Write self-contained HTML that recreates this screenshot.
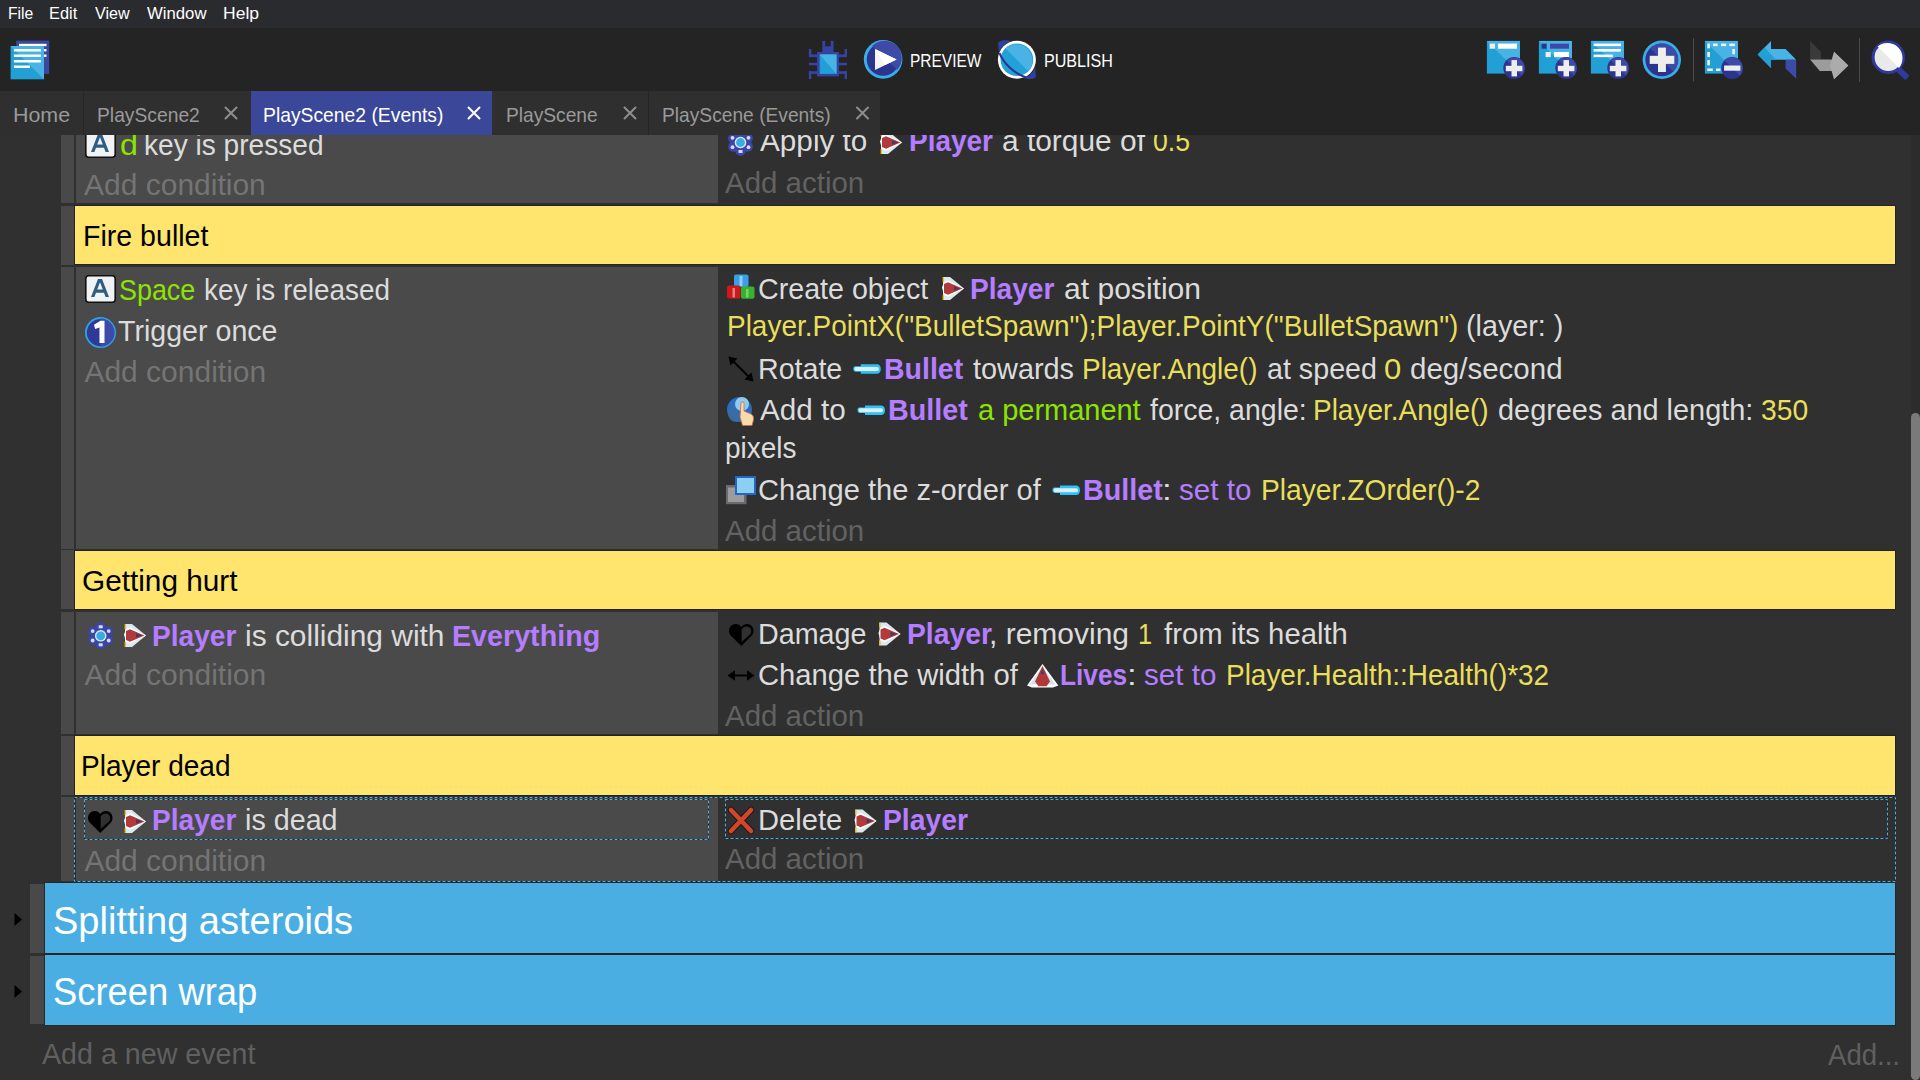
<!DOCTYPE html>
<html><head><meta charset="utf-8"><style>
html,body{margin:0;padding:0;width:1920px;height:1080px;overflow:hidden;background:#303030;}
.b{position:absolute;}
.t{position:absolute;white-space:pre;transform-origin:0 0;}
svg{position:absolute;overflow:visible;}
</style></head><body>
<!-- sheet -->
<div class="b" style="left:0;top:135px;width:1920px;height:945px;background:#303030"></div>
<!-- event 1 -->
<div class="b" style="left:61px;top:135px;width:13px;height:68px;background:#494949"></div>
<div class="b" style="left:76px;top:135px;width:642px;height:68px;background:#4a4a4a"></div>
<!-- comment 1 -->
<div class="b" style="left:61px;top:206px;width:13px;height:59px;background:#494949"></div>
<div class="b" style="left:74px;top:205px;width:1822px;height:60px;background:#22232b"></div>
<div class="b" style="left:75px;top:206px;width:1820px;height:58px;background:#ffe46e"></div>
<!-- event 3 -->
<div class="b" style="left:61px;top:267px;width:13px;height:282px;background:#494949"></div>
<div class="b" style="left:76px;top:267px;width:642px;height:282px;background:#4a4a4a"></div>
<!-- comment 2 -->
<div class="b" style="left:61px;top:550px;width:13px;height:59px;background:#494949"></div>
<div class="b" style="left:74px;top:550px;width:1822px;height:60px;background:#22232b"></div>
<div class="b" style="left:75px;top:551px;width:1820px;height:58px;background:#ffe46e"></div>
<!-- event 5 -->
<div class="b" style="left:61px;top:612px;width:13px;height:122px;background:#494949"></div>
<div class="b" style="left:76px;top:612px;width:642px;height:122px;background:#4a4a4a"></div>
<!-- comment 3 -->
<div class="b" style="left:61px;top:736px;width:13px;height:59px;background:#494949"></div>
<div class="b" style="left:74px;top:735px;width:1822px;height:61px;background:#22232b"></div>
<div class="b" style="left:75px;top:736px;width:1820px;height:59px;background:#ffe46e"></div>
<!-- event 7 -->
<div class="b" style="left:61px;top:797px;width:13px;height:84px;background:#494949"></div>
<div class="b" style="left:76px;top:797px;width:642px;height:84px;background:#4a4a4a"></div>
<!-- group 1 -->
<div class="b" style="left:30px;top:884px;width:14px;height:69px;background:#494949"></div>
<div class="b" style="left:44px;top:882px;width:1852px;height:72px;background:#2b2624"></div>
<div class="b" style="left:45px;top:883px;width:1850px;height:70px;background:#4aaee3"></div>
<!-- group 2 -->
<div class="b" style="left:30px;top:956px;width:14px;height:68px;background:#494949"></div>
<div class="b" style="left:44px;top:954px;width:1852px;height:72px;background:#2b2624"></div>
<div class="b" style="left:45px;top:955px;width:1850px;height:70px;background:#4aaee3"></div>
<!-- arrows -->
<svg style="left:0;top:0" width="1" height="1"><path d="M14.5 913 L22 919.5 L14.5 926 Z" fill="#000"/><path d="M14.5 985 L22 991.5 L14.5 998 Z" fill="#000"/></svg>
<!-- scrollbar -->
<div class="b" style="left:1911px;top:135px;width:9px;height:945px;background:#2c2c2c"></div>
<div class="b" style="left:1911px;top:413px;width:9px;height:667px;background:#7a7a7a;border-radius:5px"></div>

<svg style="left:0;top:0" width="1920" height="1080">
<g fill="none" stroke-width="1">
<rect x="74.5" y="797.5" width="1821" height="84" stroke="#1c1c1c"/>
<rect x="74.5" y="797.5" width="1821" height="84" stroke="#4ab0e4" stroke-dasharray="3 2"/>
<rect x="84.5" y="799.5" width="624" height="40" stroke="#1c1c1c"/>
<rect x="84.5" y="799.5" width="624" height="40" stroke="#4ab0e4" stroke-dasharray="3 2"/>
<rect x="725.5" y="799.5" width="1162" height="39" stroke="#1c1c1c"/>
<rect x="725.5" y="799.5" width="1162" height="39" stroke="#4ab0e4" stroke-dasharray="3 2"/>
</g>
</svg>

<svg style="left:0;top:0" width="1920" height="1080" viewBox="0 0 1920 1080">

<!-- event 1 -->
<g transform="translate(85,130)">
    <rect x="0.8" y="0.8" width="29.4" height="26.4" rx="3" fill="#f0f2f4" stroke="#111" stroke-width="1.6"/>
    <path d="M6 22 L13 4 L17 4 L24 22 L20.6 22 L19 17.8 L11 17.8 L9.4 22 Z M12.2 14.6 L17.8 14.6 L15 7.2 Z" fill="#2f5d82"/></g>
<g transform="translate(727,129)">
    <circle cx="13.5" cy="13.5" r="8.6" fill="none" stroke="#3440a0" stroke-width="4.5"/>
    <g fill="#3a46a8">
      <circle cx="13.5" cy="5" r="5"/><circle cx="13.5" cy="22" r="5"/>
      <circle cx="6.1" cy="9.25" r="5"/><circle cx="20.9" cy="9.25" r="5"/>
      <circle cx="6.1" cy="17.75" r="5"/><circle cx="20.9" cy="17.75" r="5"/>
    </g>
    <g fill="#d8dcf0">
      <rect x="11.5" y="3" width="4" height="3"/><rect x="11.5" y="21" width="4" height="3"/>
      <circle cx="5.5" cy="8.8" r="1.9"/><circle cx="21.5" cy="8.8" r="1.9"/>
      <circle cx="5.5" cy="18.2" r="1.9"/><circle cx="21.5" cy="18.2" r="1.9"/>
    </g>
    <circle cx="13.5" cy="13.5" r="5.8" fill="#dfe4f6"/>
    <circle cx="13.5" cy="13.5" r="4.4" fill="#36ace0"/></g>
<g transform="translate(880,131)">
    <path d="M1 0 L8 0 L22 11.5 L8 23 L1 23 Z" fill="#dbe8ee"/>
    <path d="M0 10.5 L2 5 L6 3.2 L22 11.5 L6 19.8 L2 18 Z" fill="#ffffff"/>
    <path d="M2 7 L6 5.3 L20.5 11.5 L6 17.7 L2 16 Z" fill="#b13a3a"/>
    <path d="M12 9.3 L18 11.5 L12 13.7 Z" fill="#48395e"/>
    <rect x="0.6" y="0" width="1.4" height="5" fill="#e8c020"/>
    <rect x="0.6" y="18" width="1.4" height="5" fill="#e8c020"/></g>
<!-- event 3 conditions -->
<g transform="translate(85,275)">
    <rect x="0.8" y="0.8" width="29.4" height="26.4" rx="3" fill="#f0f2f4" stroke="#111" stroke-width="1.6"/>
    <path d="M6 22 L13 4 L17 4 L24 22 L20.6 22 L19 17.8 L11 17.8 L9.4 22 Z M12.2 14.6 L17.8 14.6 L15 7.2 Z" fill="#2f5d82"/></g>
<g transform="translate(85,317)">
    <circle cx="15.5" cy="15.6" r="14.6" fill="#2f3a98" stroke="#2fa3e0" stroke-width="1.8"/>
    <path d="M15.5 1.5 A14 14 0 0 1 15.5 29.7 Z" fill="#3d4aa8"/>
    <path d="M9 7.8 L15.5 3.8 L19.5 3.8 L19.5 26 L14.5 26 L14.5 10.5 L10.2 12 Z" fill="#ffffff"/></g>
<!-- create object -->
<g>
  <rect x="734" y="274.5" width="14.5" height="12.5" rx="2" fill="#3a9ee8"/>
  <rect x="739.5" y="276" width="3" height="10" fill="#8fd0f8"/>
  <rect x="727" y="285.5" width="13.5" height="13" rx="2" fill="#cf1818"/>
  <rect x="732.5" y="288" width="2.5" height="9.5" fill="#e88080"/>
  <rect x="741" y="286.5" width="13.5" height="12.2" rx="2" fill="#38b030"/>
  <rect x="746" y="289" width="2.5" height="8.5" fill="#70d868"/>
</g>
<g transform="translate(942,277)">
    <path d="M1 0 L8 0 L22 11.5 L8 23 L1 23 Z" fill="#dbe8ee"/>
    <path d="M0 10.5 L2 5 L6 3.2 L22 11.5 L6 19.8 L2 18 Z" fill="#ffffff"/>
    <path d="M2 7 L6 5.3 L20.5 11.5 L6 17.7 L2 16 Z" fill="#b13a3a"/>
    <path d="M12 9.3 L18 11.5 L12 13.7 Z" fill="#48395e"/>
    <rect x="0.6" y="0" width="1.4" height="5" fill="#e8c020"/>
    <rect x="0.6" y="18" width="1.4" height="5" fill="#e8c020"/></g>
<!-- rotate -->
<g stroke="#000" stroke-width="2" fill="#000">
  <line x1="732" y1="360" x2="750" y2="378"/>
  <path d="M728.5 356.5 L737.5 358.5 L730.5 365.5 Z" stroke="none"/>
  <path d="M753.5 381.5 L744.5 379.5 L751.5 372.5 Z" stroke="none"/>
</g>
<g transform="translate(852.8,363.8)">
    <path d="M0.5 5 C0.5 3 1.5 2.5 3 2.5 L8 2.5 L8 0.5 L24 0.5 C27 0.5 28 3 28 5.2 C28 7.5 27 10 24 10 L8 10 L8 8 L3 8 C1.5 8 0.5 7.2 0.5 5 Z" fill="#2ec0f8"/>
    <path d="M1.6 5.2 C1.6 4 2.2 3.3 3.5 3.3 L24 3.3 C25.6 3.3 26 4.2 26 5.2 C26 6.3 25.6 7.2 24 7.2 L3.5 7.2 C2.2 7.2 1.6 6.5 1.6 5.2 Z" fill="#d8f0fc"/></g>
<!-- force -->
<g>
  <circle cx="739.5" cy="409.5" r="12.5" fill="#2a6cc0"/>
  <circle cx="736" cy="414" r="8" fill="#3b6e9c" opacity="0.8"/>
  <circle cx="742" cy="404" r="7" fill="#9ad6f4" opacity="0.9"/>
  <path d="M741 403 C741 401.5 744 401.5 744 403 L744 411 L751 414 C753 415 754 417 753.5 420 L752 425.5 L742.5 425.5 L740 417 Z" fill="#f6dcaa" stroke="#d06050" stroke-width="0.8"/>
</g>
<g transform="translate(857,405)">
    <path d="M0.5 5 C0.5 3 1.5 2.5 3 2.5 L8 2.5 L8 0.5 L24 0.5 C27 0.5 28 3 28 5.2 C28 7.5 27 10 24 10 L8 10 L8 8 L3 8 C1.5 8 0.5 7.2 0.5 5 Z" fill="#2ec0f8"/>
    <path d="M1.6 5.2 C1.6 4 2.2 3.3 3.5 3.3 L24 3.3 C25.6 3.3 26 4.2 26 5.2 C26 6.3 25.6 7.2 24 7.2 L3.5 7.2 C2.2 7.2 1.6 6.5 1.6 5.2 Z" fill="#d8f0fc"/></g>
<!-- z-order -->
<g>
  <rect x="726" y="485" width="20.5" height="19.2" fill="#6a6a6a"/>
  <rect x="728" y="487.5" width="16" height="14.5" fill="#9c9c9c"/>
  <rect x="735" y="476" width="21" height="19" fill="#2466c4"/>
  <rect x="737" y="478" width="17" height="15" fill="#8ccff3"/>
</g>
<g transform="translate(1052,485)">
    <path d="M0.5 5 C0.5 3 1.5 2.5 3 2.5 L8 2.5 L8 0.5 L24 0.5 C27 0.5 28 3 28 5.2 C28 7.5 27 10 24 10 L8 10 L8 8 L3 8 C1.5 8 0.5 7.2 0.5 5 Z" fill="#2ec0f8"/>
    <path d="M1.6 5.2 C1.6 4 2.2 3.3 3.5 3.3 L24 3.3 C25.6 3.3 26 4.2 26 5.2 C26 6.3 25.6 7.2 24 7.2 L3.5 7.2 C2.2 7.2 1.6 6.5 1.6 5.2 Z" fill="#d8f0fc"/></g>
<!-- event 5 conditions -->
<g transform="translate(87.2,622.3)">
    <circle cx="13.5" cy="13.5" r="8.6" fill="none" stroke="#3440a0" stroke-width="4.5"/>
    <g fill="#3a46a8">
      <circle cx="13.5" cy="5" r="5"/><circle cx="13.5" cy="22" r="5"/>
      <circle cx="6.1" cy="9.25" r="5"/><circle cx="20.9" cy="9.25" r="5"/>
      <circle cx="6.1" cy="17.75" r="5"/><circle cx="20.9" cy="17.75" r="5"/>
    </g>
    <g fill="#d8dcf0">
      <rect x="11.5" y="3" width="4" height="3"/><rect x="11.5" y="21" width="4" height="3"/>
      <circle cx="5.5" cy="8.8" r="1.9"/><circle cx="21.5" cy="8.8" r="1.9"/>
      <circle cx="5.5" cy="18.2" r="1.9"/><circle cx="21.5" cy="18.2" r="1.9"/>
    </g>
    <circle cx="13.5" cy="13.5" r="5.8" fill="#dfe4f6"/>
    <circle cx="13.5" cy="13.5" r="4.4" fill="#36ace0"/></g>
<g transform="translate(124,624)">
    <path d="M1 0 L8 0 L22 11.5 L8 23 L1 23 Z" fill="#dbe8ee"/>
    <path d="M0 10.5 L2 5 L6 3.2 L22 11.5 L6 19.8 L2 18 Z" fill="#ffffff"/>
    <path d="M2 7 L6 5.3 L20.5 11.5 L6 17.7 L2 16 Z" fill="#b13a3a"/>
    <path d="M12 9.3 L18 11.5 L12 13.7 Z" fill="#48395e"/>
    <rect x="0.6" y="0" width="1.4" height="5" fill="#e8c020"/>
    <rect x="0.6" y="18" width="1.4" height="5" fill="#e8c020"/></g>
<!-- damage -->
<g transform="translate(728.5,623)">
    <path d="M12.8 23 L2.2 12.5 C-0.5 9.5 0 3.5 4.5 1.5 C8 0 11 1.5 12.8 4 C14.6 1.5 17.6 0 21.1 1.5 C25.6 3.5 26.1 9.5 23.4 12.5 Z" fill="#000"/>
    <path d="M13.2 19 L13.2 6.5 C14.8 4 17.5 3 20 4 C23 5.3 23.5 9.3 21.6 11.3 Z" fill="#303030"/></g>
<g transform="translate(878.5,622.5)">
    <path d="M1 0 L8 0 L22 11.5 L8 23 L1 23 Z" fill="#dbe8ee"/>
    <path d="M0 10.5 L2 5 L6 3.2 L22 11.5 L6 19.8 L2 18 Z" fill="#ffffff"/>
    <path d="M2 7 L6 5.3 L20.5 11.5 L6 17.7 L2 16 Z" fill="#b13a3a"/>
    <path d="M12 9.3 L18 11.5 L12 13.7 Z" fill="#48395e"/>
    <rect x="0.6" y="0" width="1.4" height="5" fill="#e8c020"/>
    <rect x="0.6" y="18" width="1.4" height="5" fill="#e8c020"/></g>
<!-- width -->
<g fill="#000">
  <rect x="733" y="674.5" width="15" height="2"/>
  <path d="M727.5 675.5 L735 670.3 L735 680.7 Z"/>
  <path d="M754.5 675.5 L747 670.3 L747 680.7 Z"/>
</g>
<!-- lives -->
<g>
  <path d="M1042.5 664 L1058.3 685.5 L1053 687.5 L1036 687.5 L1032 687.5 L1027 685.5 Z" fill="#ffffff"/>
  <path d="M1042.5 667 L1055.5 684.5 L1029.5 684.5 Z" fill="#cfe4ea"/>
  <path d="M1042.5 666 L1050 681.5 L1046.5 686.2 L1038.5 686.2 L1035 681.5 Z" fill="#b03838"/>
  <path d="M1042.5 669 L1044.5 674 L1040.5 674 Z" fill="#44406a"/>
</g>
<!-- event 7 -->
<g transform="translate(87.5,810)">
    <path d="M12.8 23 L2.2 12.5 C-0.5 9.5 0 3.5 4.5 1.5 C8 0 11 1.5 12.8 4 C14.6 1.5 17.6 0 21.1 1.5 C25.6 3.5 26.1 9.5 23.4 12.5 Z" fill="#000"/>
    <path d="M13.2 19 L13.2 6.5 C14.8 4 17.5 3 20 4 C23 5.3 23.5 9.3 21.6 11.3 Z" fill="#303030"/></g>
<g transform="translate(124,810)">
    <path d="M1 0 L8 0 L22 11.5 L8 23 L1 23 Z" fill="#dbe8ee"/>
    <path d="M0 10.5 L2 5 L6 3.2 L22 11.5 L6 19.8 L2 18 Z" fill="#ffffff"/>
    <path d="M2 7 L6 5.3 L20.5 11.5 L6 17.7 L2 16 Z" fill="#b13a3a"/>
    <path d="M12 9.3 L18 11.5 L12 13.7 Z" fill="#48395e"/>
    <rect x="0.6" y="0" width="1.4" height="5" fill="#e8c020"/>
    <rect x="0.6" y="18" width="1.4" height="5" fill="#e8c020"/></g>
<!-- delete X -->
<g stroke-linecap="round">
  <path d="M731 810 L751 831 M751 810 L731 831" stroke="#1a1a1a" stroke-width="6.5"/>
  <path d="M731 810 L751 831 M751 810 L731 831" stroke="#d4462c" stroke-width="4.6"/>
</g>
<g transform="translate(854.5,809.5)">
    <path d="M1 0 L8 0 L22 11.5 L8 23 L1 23 Z" fill="#dbe8ee"/>
    <path d="M0 10.5 L2 5 L6 3.2 L22 11.5 L6 19.8 L2 18 Z" fill="#ffffff"/>
    <path d="M2 7 L6 5.3 L20.5 11.5 L6 17.7 L2 16 Z" fill="#b13a3a"/>
    <path d="M12 9.3 L18 11.5 L12 13.7 Z" fill="#48395e"/>
    <rect x="0.6" y="0" width="1.4" height="5" fill="#e8c020"/>
    <rect x="0.6" y="18" width="1.4" height="5" fill="#e8c020"/></g>
</svg>

<div class="t" style="left:119.93px;top:130.00px;font:30px/30px 'Liberation Sans', sans-serif;color:#8ce400;transform:scaleX(1.0714)">d</div>
<div class="t" style="left:144.13px;top:130.00px;font:30px/30px 'Liberation Sans', sans-serif;color:#dcdcdc;transform:scaleX(0.9362)">key is pressed</div>
<div class="t" style="left:84.00px;top:170.00px;font:30px/30px 'Liberation Sans', sans-serif;color:#747474;transform:scaleX(1.0000)">Add condition</div>
<div class="t" style="left:760.00px;top:126.00px;font:30px/30px 'Liberation Sans', sans-serif;color:#dcdcdc;transform:scaleX(0.9907)">Apply to</div>
<div class="t" style="left:909.14px;top:126.00px;font:bold 30px/30px 'Liberation Sans', sans-serif;color:#b57dff;transform:scaleX(0.9318)">Player</div>
<div class="t" style="left:1001.50px;top:126.00px;font:30px/30px 'Liberation Sans', sans-serif;color:#dcdcdc;transform:scaleX(0.9965)">a torque of</div>
<div class="t" style="left:1153.11px;top:126.00px;font:30px/30px 'Liberation Sans', sans-serif;color:#e8df5a;transform:scaleX(0.8875)">0.5</div>
<div class="t" style="left:725.00px;top:167.50px;font:30px/30px 'Liberation Sans', sans-serif;color:#626262;transform:scaleX(0.9821)">Add action</div>
<div class="t" style="left:82.60px;top:221.00px;font:30px/30px 'Liberation Sans', sans-serif;color:#000000;transform:scaleX(0.9519)">Fire bullet</div>
<div class="t" style="left:119.21px;top:275.00px;font:30px/30px 'Liberation Sans', sans-serif;color:#8ce400;transform:scaleX(0.8963)">Space</div>
<div class="t" style="left:203.54px;top:275.00px;font:30px/30px 'Liberation Sans', sans-serif;color:#dcdcdc;transform:scaleX(0.9296)">key is released</div>
<div class="t" style="left:118.05px;top:316.40px;font:30px/30px 'Liberation Sans', sans-serif;color:#dcdcdc;transform:scaleX(0.9533)">Trigger once</div>
<div class="t" style="left:84.40px;top:357.25px;font:30px/30px 'Liberation Sans', sans-serif;color:#747474;transform:scaleX(1.0000)">Add condition</div>
<div class="t" style="left:758.09px;top:273.50px;font:30px/30px 'Liberation Sans', sans-serif;color:#dcdcdc;transform:scaleX(0.9545)">Create object</div>
<div class="t" style="left:970.12px;top:273.50px;font:bold 30px/30px 'Liberation Sans', sans-serif;color:#b57dff;transform:scaleX(0.9375)">Player</div>
<div class="t" style="left:1063.50px;top:273.50px;font:30px/30px 'Liberation Sans', sans-serif;color:#dcdcdc;transform:scaleX(1.0019)">at position</div>
<div class="t" style="left:727.14px;top:311.00px;font:30px/30px 'Liberation Sans', sans-serif;color:#e8df5a;transform:scaleX(0.9321)">Player.PointX("BulletSpawn");Player.PointY("BulletSpawn")</div>
<div class="t" style="left:1465.59px;top:311.00px;font:30px/30px 'Liberation Sans', sans-serif;color:#dcdcdc;transform:scaleX(0.9566)">(layer: )</div>
<div class="t" style="left:758.09px;top:353.50px;font:30px/30px 'Liberation Sans', sans-serif;color:#dcdcdc;transform:scaleX(0.9529)">Rotate</div>
<div class="t" style="left:883.60px;top:353.50px;font:bold 30px/30px 'Liberation Sans', sans-serif;color:#b57dff;transform:scaleX(0.9506)">Bullet</div>
<div class="t" style="left:973.00px;top:353.50px;font:30px/30px 'Liberation Sans', sans-serif;color:#dcdcdc;transform:scaleX(0.9615)">towards</div>
<div class="t" style="left:1081.89px;top:353.50px;font:30px/30px 'Liberation Sans', sans-serif;color:#e8df5a;transform:scaleX(0.9311)">Player.Angle()</div>
<div class="t" style="left:1267.04px;top:353.50px;font:30px/30px 'Liberation Sans', sans-serif;color:#dcdcdc;transform:scaleX(0.9554)">at speed</div>
<div class="t" style="left:1384.47px;top:353.50px;font:30px/30px 'Liberation Sans', sans-serif;color:#e8df5a;transform:scaleX(1.0333)">0</div>
<div class="t" style="left:1410.02px;top:353.50px;font:30px/30px 'Liberation Sans', sans-serif;color:#dcdcdc;transform:scaleX(0.9836)">deg/second</div>
<div class="t" style="left:760.00px;top:395.00px;font:30px/30px 'Liberation Sans', sans-serif;color:#dcdcdc;transform:scaleX(0.9884)">Add to</div>
<div class="t" style="left:888.09px;top:395.00px;font:bold 30px/30px 'Liberation Sans', sans-serif;color:#b57dff;transform:scaleX(0.9568)">Bullet</div>
<div class="t" style="left:977.78px;top:395.00px;font:30px/30px 'Liberation Sans', sans-serif;color:#8ce400;transform:scaleX(0.9656)">a permanent</div>
<div class="t" style="left:1150.00px;top:395.00px;font:30px/30px 'Liberation Sans', sans-serif;color:#dcdcdc;transform:scaleX(0.9491)">force, angle:</div>
<div class="t" style="left:1313.14px;top:395.00px;font:30px/30px 'Liberation Sans', sans-serif;color:#e8df5a;transform:scaleX(0.9324)">Player.Angle()</div>
<div class="t" style="left:1497.79px;top:395.00px;font:30px/30px 'Liberation Sans', sans-serif;color:#dcdcdc;transform:scaleX(0.9628)">degrees and length:</div>
<div class="t" style="left:1760.56px;top:395.00px;font:30px/30px 'Liberation Sans', sans-serif;color:#e8df5a;transform:scaleX(0.9417)">350</div>
<div class="t" style="left:725.14px;top:432.50px;font:30px/30px 'Liberation Sans', sans-serif;color:#dcdcdc;transform:scaleX(0.9324)">pixels</div>
<div class="t" style="left:758.06px;top:475.00px;font:30px/30px 'Liberation Sans', sans-serif;color:#dcdcdc;transform:scaleX(0.9690)">Change the z-order of</div>
<div class="t" style="left:1082.59px;top:475.00px;font:bold 30px/30px 'Liberation Sans', sans-serif;color:#b57dff;transform:scaleX(0.9568)">Bullet</div>
<div class="t" style="left:1161.50px;top:475.00px;font:30px/30px 'Liberation Sans', sans-serif;color:#dcdcdc;transform:scaleX(1.1667)">:</div>
<div class="t" style="left:1179.01px;top:475.00px;font:30px/30px 'Liberation Sans', sans-serif;color:#b57dff;transform:scaleX(0.9859)">set to</div>
<div class="t" style="left:1260.62px;top:475.00px;font:30px/30px 'Liberation Sans', sans-serif;color:#e8df5a;transform:scaleX(0.9402)">Player.ZOrder()-2</div>
<div class="t" style="left:725.00px;top:516.00px;font:30px/30px 'Liberation Sans', sans-serif;color:#626262;transform:scaleX(0.9821)">Add action</div>
<div class="t" style="left:81.52px;top:565.60px;font:30px/30px 'Liberation Sans', sans-serif;color:#000000;transform:scaleX(0.9919)">Getting hurt</div>
<div class="t" style="left:152.13px;top:620.60px;font:bold 30px/30px 'Liberation Sans', sans-serif;color:#b57dff;transform:scaleX(0.9364)">Player</div>
<div class="t" style="left:244.61px;top:620.60px;font:30px/30px 'Liberation Sans', sans-serif;color:#dcdcdc;transform:scaleX(0.9969)">is colliding with</div>
<div class="t" style="left:451.79px;top:620.60px;font:bold 30px/30px 'Liberation Sans', sans-serif;color:#b57dff;transform:scaleX(0.9556)">Everything</div>
<div class="t" style="left:84.40px;top:660.00px;font:30px/30px 'Liberation Sans', sans-serif;color:#747474;transform:scaleX(1.0000)">Add condition</div>
<div class="t" style="left:758.09px;top:618.70px;font:30px/30px 'Liberation Sans', sans-serif;color:#dcdcdc;transform:scaleX(0.9564)">Damage</div>
<div class="t" style="left:906.86px;top:618.70px;font:bold 30px/30px 'Liberation Sans', sans-serif;color:#b57dff;transform:scaleX(0.9426)">Player</div>
<div class="t" style="left:989.00px;top:618.70px;font:30px/30px 'Liberation Sans', sans-serif;color:#dcdcdc;transform:scaleX(1.0000)">, removing</div>
<div class="t" style="left:1138.31px;top:618.70px;font:30px/30px 'Liberation Sans', sans-serif;color:#e8df5a;transform:scaleX(0.8462)">1</div>
<div class="t" style="left:1163.75px;top:618.70px;font:30px/30px 'Liberation Sans', sans-serif;color:#dcdcdc;transform:scaleX(0.9759)">from its health</div>
<div class="t" style="left:758.05px;top:660.20px;font:30px/30px 'Liberation Sans', sans-serif;color:#dcdcdc;transform:scaleX(0.9736)">Change the width of</div>
<div class="t" style="left:1059.95px;top:660.20px;font:bold 30px/30px 'Liberation Sans', sans-serif;color:#b57dff;transform:scaleX(0.8757)">Lives</div>
<div class="t" style="left:1126.50px;top:660.20px;font:30px/30px 'Liberation Sans', sans-serif;color:#dcdcdc;transform:scaleX(1.1667)">:</div>
<div class="t" style="left:1144.01px;top:660.20px;font:30px/30px 'Liberation Sans', sans-serif;color:#b57dff;transform:scaleX(0.9859)">set to</div>
<div class="t" style="left:1225.64px;top:660.20px;font:30px/30px 'Liberation Sans', sans-serif;color:#e8df5a;transform:scaleX(0.9317)">Player.Health::Health()*32</div>
<div class="t" style="left:725.00px;top:701.00px;font:30px/30px 'Liberation Sans', sans-serif;color:#626262;transform:scaleX(0.9821)">Add action</div>
<div class="t" style="left:81.43px;top:751.00px;font:30px/30px 'Liberation Sans', sans-serif;color:#000000;transform:scaleX(0.9340)">Player dead</div>
<div class="t" style="left:152.13px;top:805.00px;font:bold 30px/30px 'Liberation Sans', sans-serif;color:#b57dff;transform:scaleX(0.9364)">Player</div>
<div class="t" style="left:244.69px;top:805.00px;font:30px/30px 'Liberation Sans', sans-serif;color:#dcdcdc;transform:scaleX(0.9570)">is dead</div>
<div class="t" style="left:84.40px;top:846.00px;font:30px/30px 'Liberation Sans', sans-serif;color:#747474;transform:scaleX(1.0000)">Add condition</div>
<div class="t" style="left:758.06px;top:804.90px;font:30px/30px 'Liberation Sans', sans-serif;color:#dcdcdc;transform:scaleX(0.9711)">Delete</div>
<div class="t" style="left:882.71px;top:804.90px;font:bold 30px/30px 'Liberation Sans', sans-serif;color:#b57dff;transform:scaleX(0.9432)">Player</div>
<div class="t" style="left:725.00px;top:844.30px;font:30px/30px 'Liberation Sans', sans-serif;color:#626262;transform:scaleX(0.9821)">Add action</div>
<div class="t" style="left:52.65px;top:900.75px;font:39px/39px 'Liberation Sans', sans-serif;color:#ffffff;transform:scaleX(0.9750)">Splitting asteroids</div>
<div class="t" style="left:52.73px;top:972.00px;font:39px/39px 'Liberation Sans', sans-serif;color:#ffffff;transform:scaleX(0.9330)">Screen wrap</div>
<div class="t" style="left:41.70px;top:1039.40px;font:30px/30px 'Liberation Sans', sans-serif;color:#606060;transform:scaleX(0.9547)">Add a new event</div>
<div class="t" style="left:1828.00px;top:1039.70px;font:30px/30px 'Liberation Sans', sans-serif;color:#606060;transform:scaleX(0.9184)">Add...</div>
<!-- menubar -->
<div class="b" style="left:0;top:0;width:1920px;height:28px;background:#2a2b2f"></div>
<!-- toolbar -->
<div class="b" style="left:0;top:28px;width:1920px;height:63px;background:#242424"></div>
<!-- tabbar -->
<div class="b" style="left:0;top:91px;width:1920px;height:44px;background:#242424"></div>
<div class="b" style="left:0;top:91px;width:880px;height:44px;background:#2f2f2f"></div>
<div class="b" style="left:83px;top:91px;width:1px;height:44px;background:#262626"></div>
<div class="b" style="left:251px;top:91px;width:241px;height:44px;background:#3b4799"></div>
<div class="b" style="left:648px;top:91px;width:1px;height:44px;background:#262626"></div>

<svg style="left:0;top:0" width="1920" height="135" viewBox="0 0 1920 135">
<!-- logo -->
<g>
  <rect x="16.2" y="40.6" width="33" height="33.3" fill="#3b479c"/>
  <rect x="19" y="43.8" width="27.5" height="2.4" fill="#fff"/>
  <rect x="44" y="49" width="2.5" height="2.4" fill="#fff"/>
  <rect x="44" y="54.5" width="2.5" height="2.4" fill="#fff"/>
  <rect x="10.6" y="46" width="33.4" height="33.3" fill="#22a0d6"/>
  <path d="M10.6 46 L44 46 L44 79.3 Z" fill="#4ab3e6"/>
  <rect x="13.9" y="49" width="27" height="2.5" fill="#fff"/>
  <rect x="13.9" y="54.5" width="27" height="2.5" fill="#fff"/>
  <rect x="13.9" y="60" width="27" height="2.5" fill="#fff"/>
  <rect x="13.9" y="65.5" width="16" height="2.5" fill="#fff"/>
</g>
<!-- bug -->
<g fill="#3743a3">
  <rect x="817" y="52" width="22" height="24.4"/>
  <rect x="822.4" y="46.3" width="11.1" height="6"/>
  <rect x="822.4" y="40.9" width="2.7" height="6"/>
  <rect x="830.8" y="40.9" width="2.7" height="6"/>
  <rect x="808.9" y="49" width="2.4" height="8"/>
  <rect x="808.9" y="54.4" width="9" height="2.7"/>
  <rect x="808.9" y="62.8" width="9" height="2.5"/>
  <rect x="808.9" y="71.2" width="9" height="2.7"/>
  <rect x="808.9" y="71.2" width="2.4" height="7.8"/>
  <rect x="844.6" y="49" width="2.4" height="8"/>
  <rect x="838" y="54.4" width="9" height="2.7"/>
  <rect x="838" y="62.8" width="9" height="2.5"/>
  <rect x="838" y="71.2" width="9" height="2.7"/>
  <rect x="844.6" y="71.2" width="2.4" height="7.8"/>
</g>
<rect x="819.7" y="54.4" width="16.8" height="19.5" fill="#22a0d6"/>
<path d="M819.7 54.4 L836.5 54.4 L836.5 73.9 Z" fill="#4ab3e6"/>
<!-- play -->
<circle cx="883.1" cy="59.4" r="19.3" fill="#3aaee8"/>
<circle cx="883.1" cy="59.4" r="16.3" fill="#2b3590"/>
<path d="M872 46 A16.3 16.3 0 0 1 897 70 Z" fill="#3d4aa8"/>
<path d="M875 49 L896.6 59.6 L875 70.1 Z" fill="#f4f4f4"/>
<path d="M875 49 L896.6 59.6 L885 65 Z" fill="#ffffff"/>
<!-- planet -->
<g>
  <circle cx="1016.9" cy="59.8" r="19" fill="#ffffff"/>
  <circle cx="1016.9" cy="59.8" r="16.3" fill="#23a0d6"/>
  <path d="M1005.4 48.3 A16.3 16.3 0 0 1 1028.4 71.3 Z" fill="#4ab3e6"/>
  <path d="M998 42.5 C1002 39.5 1008 40 1011 41.5 C1005 43 1000 48 999 53 Z" fill="#3040a0"/>
  <path d="M1036 77 C1033 80 1027 79.5 1024 78 C1029 76.5 1034 72 1035 67 Z" fill="#3040a0"/>
  <path d="M999.5 53 C1003 63 1015 74 1026 77.5" stroke="#2b3590" stroke-width="2.2" fill="none"/>
</g>
<!-- add event -->
<g id="sq">
</g>
<g>
  <rect x="1486.9" y="40.9" width="33" height="32.7" fill="#22a0d6"/>
  <path d="M1486.9 40.9 L1519.9 40.9 L1519.9 73.6 Z" fill="#4ab3e6"/>
  <rect x="1489.6" y="43.6" width="5.4" height="5.1" fill="#eee"/>
  <rect x="1498" y="43.6" width="19" height="5.1" fill="#fff"/>
  <circle cx="1514.2" cy="68" r="10.9" fill="#2b3590"/>
  <path d="M1506.5 60.3 A10.9 10.9 0 0 1 1521.9 75.7 Z" fill="#3d4aa8"/>
  <rect x="1505.8" y="65.8" width="16.6" height="5.4" fill="#eee"/>
  <rect x="1511.5" y="60.1" width="5.5" height="16.3" fill="#eee"/>
</g>
<g>
  <rect x="1538.9" y="40.9" width="33" height="32.7" fill="#22a0d6"/>
  <path d="M1538.9 40.9 L1571.9 40.9 L1571.9 73.6 Z" fill="#4ab3e6"/>
  <rect x="1541.6" y="43.6" width="5.1" height="5.1" fill="#2b3590"/>
  <rect x="1550" y="43.6" width="19" height="5.1" fill="#3d4aa8"/>
  <rect x="1545.6" y="52" width="5.2" height="5.1" fill="#eee"/>
  <rect x="1554" y="52" width="15" height="5.1" fill="#fff"/>
  <circle cx="1566.2" cy="68" r="10.9" fill="#2b3590"/>
  <path d="M1558.5 60.3 A10.9 10.9 0 0 1 1573.9 75.7 Z" fill="#3d4aa8"/>
  <rect x="1557.8" y="65.8" width="16.6" height="5.4" fill="#eee"/>
  <rect x="1563.5" y="60.1" width="5.5" height="16.3" fill="#eee"/>
</g>
<g>
  <rect x="1590.9" y="40.9" width="33" height="32.7" fill="#22a0d6"/>
  <path d="M1590.9 40.9 L1623.9 40.9 L1623.9 73.6 Z" fill="#4ab3e6"/>
  <rect x="1593.6" y="43.6" width="27.4" height="2.5" fill="#fff"/>
  <rect x="1593.6" y="49" width="27.4" height="2.6" fill="#fff"/>
  <rect x="1593.6" y="54.6" width="19.2" height="2.5" fill="#fff"/>
  <circle cx="1618.2" cy="68" r="10.9" fill="#2b3590"/>
  <path d="M1610.5 60.3 A10.9 10.9 0 0 1 1625.9 75.7 Z" fill="#3d4aa8"/>
  <rect x="1609.8" y="65.8" width="16.6" height="5.4" fill="#eee"/>
  <rect x="1615.5" y="60.1" width="5.5" height="16.3" fill="#eee"/>
</g>
<g>
  <circle cx="1661.8" cy="59.8" r="19.2" fill="#3aaee8"/>
  <circle cx="1661.8" cy="59.8" r="16.4" fill="#2b3590"/>
  <path d="M1650.2 48.2 A16.4 16.4 0 0 1 1673.4 71.4 Z" fill="#3d4aa8"/>
  <rect x="1649.7" y="55.8" width="24.6" height="8.1" fill="#eee"/>
  <rect x="1658" y="47.6" width="7.9" height="24.4" fill="#eee"/>
</g>
<rect x="1693" y="38" width="1" height="43.4" fill="#4a4a4a"/>
<g>
  <rect x="1704.9" y="40.9" width="33" height="32.7" fill="#22a0d6"/>
  <path d="M1704.9 40.9 L1737.9 40.9 L1737.9 73.6 Z" fill="#4ab3e6"/>
  <g fill="#f2f2f2">
    <rect x="1707.3" y="43.6" width="2.6" height="4.8"/>
    <rect x="1713" y="43.6" width="4.6" height="2.5"/>
    <rect x="1721" y="43.6" width="5.2" height="2.5"/>
    <rect x="1729.3" y="43.6" width="5.6" height="2.5"/>
    <rect x="1732.3" y="49" width="2.6" height="5.3"/>
    <rect x="1707.3" y="52" width="2.6" height="5.1"/>
    <rect x="1707.3" y="60" width="2.6" height="5.3"/>
    <rect x="1707.3" y="68.5" width="5.5" height="2.5"/>
    <rect x="1716" y="68.5" width="4.5" height="2.5"/>
  </g>
  <circle cx="1732.2" cy="68" r="10.9" fill="#2b3590"/>
  <path d="M1724.5 60.3 A10.9 10.9 0 0 1 1739.9 75.7 Z" fill="#3d4aa8"/>
  <rect x="1724.1" y="65.5" width="16.3" height="5.2" fill="#eee"/>
</g>
<!-- undo -->
<g>
  <path d="M1757.7 54.4 L1771 40.9 L1771 49 L1785.6 49 L1796.2 59.8 L1771 59.8 L1771 68 Z" fill="#4ab3e6"/>
  <path d="M1757.7 54.4 L1764.5 47.6 L1776 59.8 L1771 59.8 L1771 68 Z" fill="#22a0d6"/>
  <path d="M1785.6 59.8 L1796.2 59.8 L1796.2 78.8 L1785.6 68.5 Z" fill="#3d4aa8"/>
</g>
<!-- redo -->
<g>
  <path d="M1810.1 41 L1820.9 51.8 L1820.9 59.6 L1810.1 59.6 Z" fill="#3a3a3a"/>
  <path d="M1810.1 59.6 L1834 59.6 L1834 51.8 L1848.3 65.5 L1834 79.2 L1834 71 L1819.8 71 Z" fill="#9c9c9c"/>
  <path d="M1834 51.8 L1848.3 65.5 L1834 79.2 L1830 65.5 Z" fill="#ababab"/>
</g>
<rect x="1859" y="38" width="1" height="44" fill="#4a4a4a"/>
<!-- search -->
<g>
  <line x1="1898" y1="69" x2="1907.5" y2="78" stroke="#2e3a9e" stroke-width="6"/>
  <circle cx="1888.3" cy="57.2" r="15.2" fill="#e9e9e9" stroke="#2e3a9e" stroke-width="3"/>
  <path d="M1877.6 46.5 A15.2 15.2 0 0 1 1899 67.9 Z" fill="#ffffff"/>
</g>
<!-- tab close x -->
<g stroke-width="2" stroke-linecap="round">
  <path d="M225.5 107.5 L236.5 118.5 M236.5 107.5 L225.5 118.5" stroke="#8e8e8e"/>
  <path d="M468.5 107.5 L479.5 118.5 M479.5 107.5 L468.5 118.5" stroke="#ffffff"/>
  <path d="M624.5 107.5 L635.5 118.5 M635.5 107.5 L624.5 118.5" stroke="#8e8e8e"/>
  <path d="M857 107.5 L868 118.5 M868 107.5 L857 118.5" stroke="#8e8e8e"/>
</g>
</svg>

<div class="t" style="left:8.08px;top:5.00px;font:17px/17px 'Liberation Sans', sans-serif;color:#ffffff;transform:scaleX(0.9231)">File</div>
<div class="t" style="left:49.04px;top:5.00px;font:17px/17px 'Liberation Sans', sans-serif;color:#ffffff;transform:scaleX(0.9643)">Edit</div>
<div class="t" style="left:95.00px;top:5.00px;font:17px/17px 'Liberation Sans', sans-serif;color:#ffffff;transform:scaleX(0.9459)">View</div>
<div class="t" style="left:147.00px;top:5.00px;font:17px/17px 'Liberation Sans', sans-serif;color:#ffffff;transform:scaleX(0.9836)">Window</div>
<div class="t" style="left:222.97px;top:5.00px;font:17px/17px 'Liberation Sans', sans-serif;color:#ffffff;transform:scaleX(1.0303)">Help</div>
<div class="t" style="left:910.14px;top:51.60px;font:18px/18px 'Liberation Sans', sans-serif;color:#ffffff;transform:scaleX(0.8598)">PREVIEW</div>
<div class="t" style="left:1044.11px;top:51.60px;font:18px/18px 'Liberation Sans', sans-serif;color:#ffffff;transform:scaleX(0.8933)">PUBLISH</div>
<div class="t" style="left:12.96px;top:104.00px;font:21px/21px 'Liberation Sans', sans-serif;color:#9a9a9a;transform:scaleX(1.0189)">Home</div>
<div class="t" style="left:97.17px;top:104.00px;font:21px/21px 'Liberation Sans', sans-serif;color:#9a9a9a;transform:scaleX(0.9174)">PlayScene2</div>
<div class="t" style="left:263.16px;top:104.00px;font:21px/21px 'Liberation Sans', sans-serif;color:#ffffff;transform:scaleX(0.9197)">PlayScene2 (Events)</div>
<div class="t" style="left:506.17px;top:104.00px;font:21px/21px 'Liberation Sans', sans-serif;color:#9a9a9a;transform:scaleX(0.9133)">PlayScene</div>
<div class="t" style="left:662.17px;top:104.00px;font:21px/21px 'Liberation Sans', sans-serif;color:#9a9a9a;transform:scaleX(0.9144)">PlayScene (Events)</div>
</body></html>
